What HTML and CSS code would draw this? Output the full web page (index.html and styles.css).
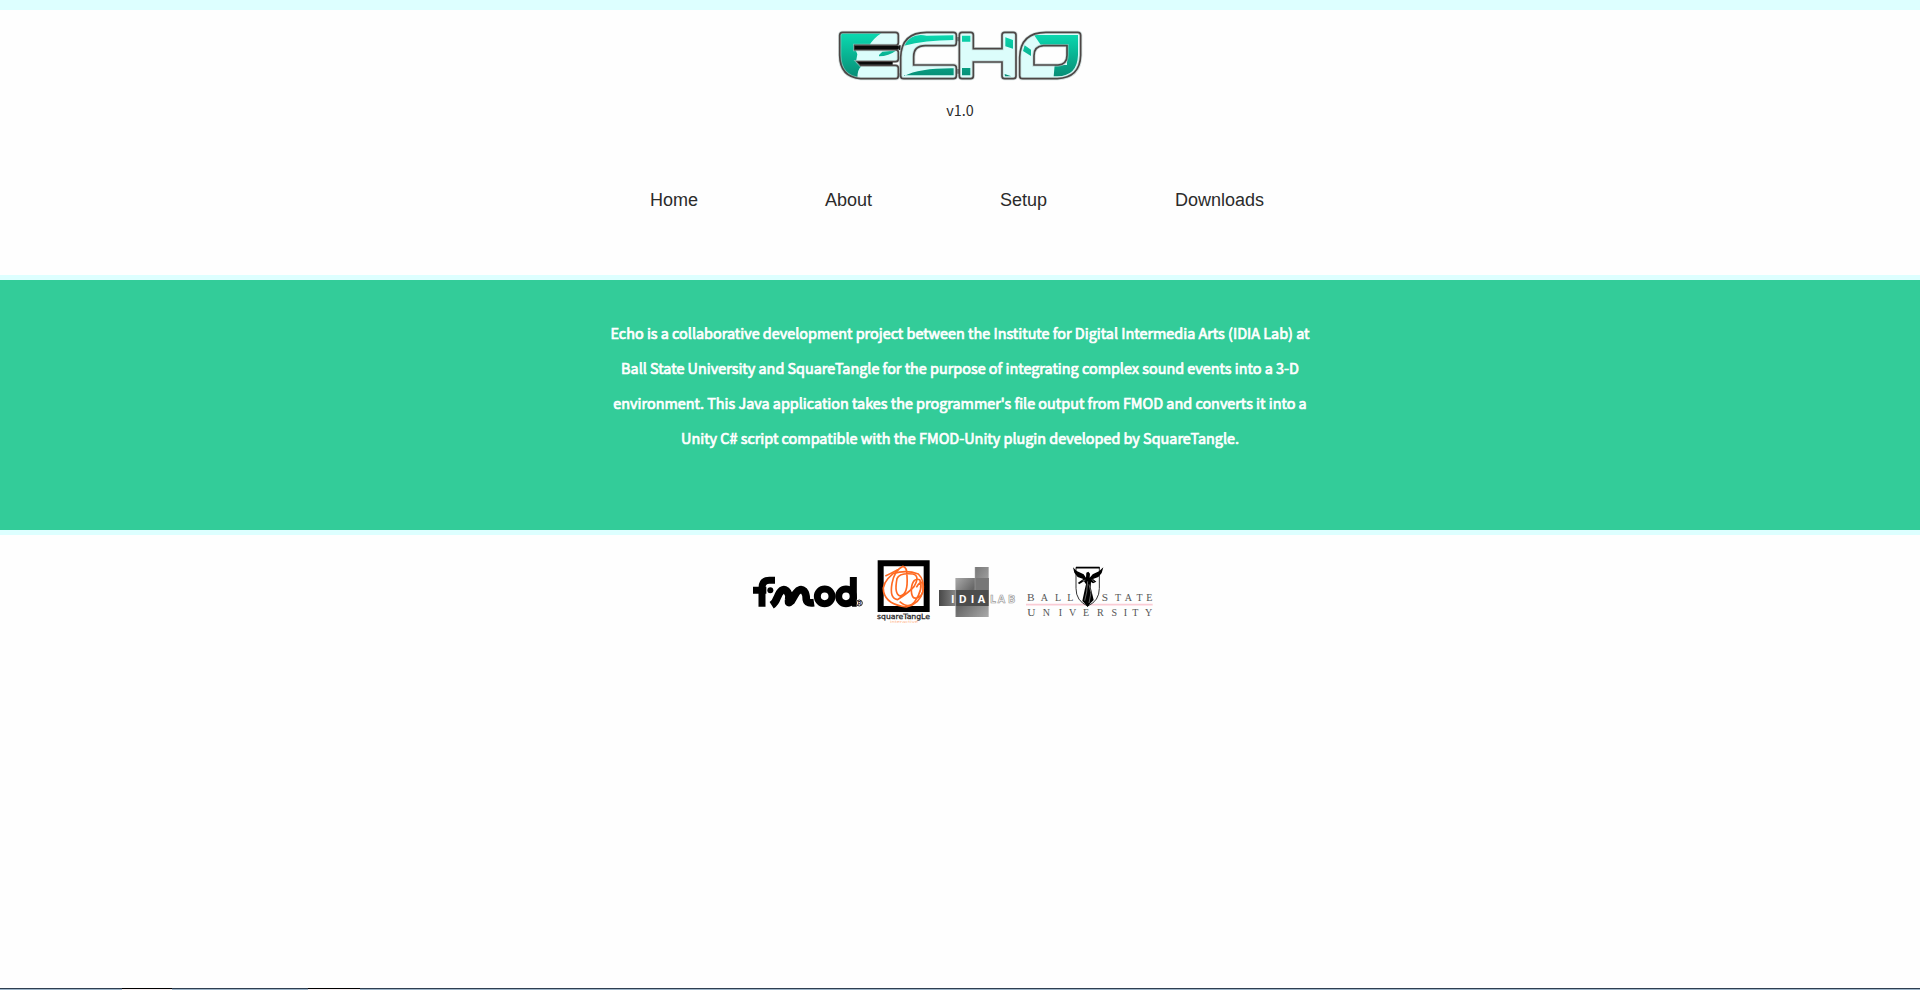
FILE: index.html
```html
<!DOCTYPE html>
<html lang="en">
<head>
<meta charset="utf-8">
<title>Echo</title>
<link rel="stylesheet" href="styles.css">
</head>
<body>
<header class="header">
  <svg class="logo" viewBox="21 87 738 156" role="img" aria-label="Echo">
    <defs>
      <linearGradient id="teal" x1="0" y1="96" x2="0" y2="236" gradientUnits="userSpaceOnUse">
        <stop offset="0" stop-color="#0bdcb2"/><stop offset="1" stop-color="#078a73"/>
      </linearGradient>
      <path id="e" d="M38 97H196Q205 97 205 105V128Q205 136 196 136H74V149H196Q205 149 205 157V177Q205 185 196 185H82L92 196H196Q205 196 205 204V227Q205 236 196 236H92Q30 232 29 166V106Q29 97 38 97Z"/>
      <path id="c" d="M290 97H370Q379 97 379 105V128Q379 137 370 137H286Q251 137 251 170V195H370Q379 195 379 203V228Q379 236 370 236H221Q212 236 212 227V172Q214 97 290 97Z"/>
      <path id="h" d="M396 97H422Q430 97 430 105V146H516V105Q516 97 524 97H550Q558 97 558 105V228Q558 236 550 236H524Q516 236 516 228V186H430V228Q430 236 422 236H396Q388 236 388 228V105Q388 97 396 97Z"/>
      <path id="o" fill-rule="evenodd" d="M648 97H743Q752 97 752 106V166Q750 233 682 236H578Q569 236 569 227V172Q571 97 648 97ZM640 137Q612 139 612 167V195H684Q711 194 711 166V137Z"/>
      <clipPath id="letters"><use href="#e"/><use href="#c"/><use href="#h"/><path clip-rule="evenodd" d="M648 97H743Q752 97 752 106V166Q750 233 682 236H578Q569 236 569 227V172Q571 97 648 97ZM640 137Q612 139 612 167V195H684Q711 194 711 166V137Z"/></clipPath>
    </defs>
    <path fill="#171514" d="M376 111H392V124H376ZM376 207H392V221H376ZM196 136H212V150H196ZM203 220H212V230H203Z"/>
    <g fill="#dcfdfb"><use href="#e"/><use href="#c"/><use href="#h"/><use href="#o"/></g>
    <g clip-path="url(#letters)" fill="url(#teal)">
      <path d="M29 97H158Q124 119 117 140L72 137L82 163L78 185L94 199Q82 208 82 236H29Z"/>
      <path d="M147 165L157 155L200 151Q176 169 147 169Z"/>
      <path d="M222 137Q240 98 290 107L370 106V120Q285 121 222 137Z"/>
      <path d="M222 228Q270 204 371 205V226H222Z"/>
      <path d="M396 107H421V125H396ZM396 204H421V226H396Z"/>
      <path d="M526 112L549 120V146L526 139ZM524 222L544 229H525Z"/>
      <path d="M584 136L603 149V168L579 153Z"/>
      <path d="M612 105H744V165Q742 228 682 229H671L674 195H711V137H634Z"/>
    </g>
    <g class="logo-edge-light"><use href="#e"/><use href="#c"/><use href="#h"/><use href="#o"/></g>
    <g class="logo-edge"><use href="#e"/><use href="#c"/><use href="#h"/><use href="#o"/></g>
    <path fill="#0a0a0a" d="M74 138H204V148H74ZM82 186H188V194H92Z"/>
    <path fill="#fff" d="M190 189H203V192H190Z"/>
  </svg>
  <p class="version">v1.0</p>
  <nav class="nav">
    <a>Home</a><a>About</a><a>Setup</a><a>Downloads</a>
  </nav>
</header>
<main class="intro">
  <p>Echo is a collaborative development project between the Institute for Digital Intermedia Arts (IDIA Lab) at<br>
  Ball State University and SquareTangle for the purpose of integrating complex sound events into a 3-D<br>
  environment. This Java application takes the programmer's file output from FMOD and converts it into a<br>
  Unity C# script compatible with the FMOD-Unity plugin developed by SquareTangle.</p>
</main>
<section class="partners">
  <svg class="fmod" viewBox="36 168 336 96" role="img" aria-label="fmod">
    <g fill="none" stroke="#000" stroke-width="21">
      <path d="M66 260V203Q66 181 88 181H105M39 211H79"/>
      <path stroke-width="23" stroke-linejoin="round" d="M95 256Q106 249 112 232Q125 200 139 212Q149 221 146 239Q143 254 154 243L168 219Q181 202 192 213Q199 221 199 239Q201 251 222 248"/>
      <circle cx="254" cy="229" r="22"/><circle cx="318" cy="229" r="22"/><path d="M340 171V238" />
    </g>
    <path d="M330 230H350V260H337Q329 253 330 230Z"/>
    <circle cx="91" cy="211" r="9"/>
    <circle cx="358" cy="249" r="9" fill="#fff" stroke="#222" stroke-width="3"/>
    <text class="reg" x="358" y="254" text-anchor="middle">R</text>
  </svg>
  <svg class="squaretangle" viewBox="408 117 165 198" role="img" aria-label="SquareTangle">
    <path fill="#fff" stroke="#000" stroke-width="18" d="M422 130H560V267H422Z"/>
    <g fill="none" stroke="#ff6a22" stroke-width="5">
      <path d="M460 160Q424 190 431 216Q440 254 499 261Q539 252 549 214Q554 180 535 162Q500 149 460 160Z"/>
      <path d="M436 168Q470 152 489 139Q501 141 501 168Q505 224 480 228Q462 222 471 176Q478 158 519 162Q541 168 522 200Q503 221 472 239Q448 236 456 190Q464 150 489 139"/>
      <path d="M479 245Q505 268 524 245Q552 205 539 179Q519 172 514 205Q513 241 533 233Q554 226 549 190Q542 180 529 202"/>
    </g>
    <text class="sq-name" x="411" y="297" textLength="159" lengthAdjust="spacingAndGlyphs">squareTangLe</text>
    <text class="sq-tag" x="450" y="310" textLength="84" lengthAdjust="spacingAndGlyphs">interactive</text>
  </svg>
  <svg class="idia" viewBox="24 138 237 156" role="img" aria-label="IDIA Lab">
    <defs>
      <linearGradient id="g1"><stop stop-color="#484848"/><stop offset="1" stop-color="#888"/></linearGradient>
      <linearGradient id="g2" x2="1" y2="1"><stop stop-color="#aaa"/><stop offset=".4" stop-color="#666"/><stop offset="1" stop-color="#aaa"/></linearGradient>
      <linearGradient id="g3" y2="1"><stop stop-color="#777"/><stop offset="1" stop-color="#aaa"/></linearGradient>
    </defs>
    <path fill="url(#g3)" d="M135 141H176V210H135Z"/>
    <path fill="url(#g2)" d="M77 174H176V291H77Z"/>
    <path fill="#777" d="M135 174H176V210H135Z"/>
    <path fill="url(#g1)" d="M27 210H78V258H27Z"/>
    <path fill="#4c4c4c" d="M78 210H176V258H78Z"/>
    <path fill="none" stroke="#aaa" stroke-width="1.5" d="M77 174V291M135 141V210"/>
    <text class="idia-name" y="248"><tspan x="63">I</tspan><tspan x="86">D</tspan><tspan x="122">I</tspan><tspan x="143">A</tspan></text>
    <text class="lab-name" y="249"><tspan x="180">L</tspan><tspan x="203">A</tspan><tspan x="234">B</tspan></text>
  </svg>
  <svg class="bsu" viewBox="285 138 387 156" role="img" aria-label="Ball State University">
    <path stroke="#f9ccd5" stroke-width="5" d="M288 254H668"/>
    <path fill="#fff" stroke="#333" stroke-width="3" d="M438 142H508V205Q508 243 473 258Q438 243 438 205Z"/>
    <path stroke="#000" stroke-width="5" d="M438 143H509"/>
    <path d="M429 142L440 153L461 163L468 173L469 158L475 155L480 161L479 173L488 163L507 154L520 142L515 159L505 171L489 177L499 185L489 190L483 186L482 202L491 240L480 251L473 261L465 251L457 243L464 210L468 193L462 184L447 193L444 188L460 177L443 171L433 158Z"/>
    <path fill="none" stroke="#999" stroke-width="2" d="M473 184L470 216L464 242M477 193L483 218L477 249M486 178L492 186M457 183L466 180"/>
    <g class="bsu-text">
      <text class="cap" x="302" y="243">B</text><text x="343" y="243">A</text><text x="384" y="243">L</text><text x="421" y="243">L</text>
      <text class="cap" x="525" y="243">S</text><text x="564" y="243">T</text><text x="595" y="243">A</text><text x="629" y="243">T</text><text x="658" y="243">E</text>
      <text class="cap" x="304" y="289">U</text><text x="349" y="289">N</text><text x="391" y="289">I</text><text x="428" y="289">V</text><text x="468" y="289">E</text><text x="511" y="289">R</text><text x="553" y="289">S</text><text x="586" y="289">I</text><text x="616" y="289">T</text><text x="656" y="289">Y</text>
    </g>
  </svg>
</section>
<footer class="edge"><i></i><i></i></footer>
</body>
</html>
```
FILE: styles.css
```css
* { box-sizing: border-box; }
body {
  margin: 0;
  height: 990px;
  overflow: hidden;
  display: flex;
  flex-direction: column;
  background: #fefefe;
  color: #2b2b2b;
  font-family: "Noto Sans CJK SC", "Noto Sans", sans-serif;
}
p { margin: 0; }
.header {
  height: 275px;
  border-top: 10px solid #ddffff;
  padding-top: 19px;
  display: flex;
  flex-direction: column;
  align-items: center;
}
.logo { width: 246px; height: 52px; display: block; }
.logo-edge-light { fill: none; stroke: #b5cbc9; stroke-width: 10; stroke-opacity: .6; }
.logo-edge { fill: none; stroke: #4c4645; stroke-width: 5; }
.version { margin-top: 17px; font-size: 14.4px; line-height: 24px; }
.nav {
  width: 620px;
  margin-top: 68px;
  display: grid;
  grid-template-columns: repeat(3, 175px) 95px;
  font: 18px/20px "Liberation Sans", Arial, sans-serif;
}
.intro {
  height: 260px;
  border: solid #ddffff;
  border-width: 5px 0;
  padding-top: 35px;
  background: #33cc99;
  color: #fff;
  text-align: center;
  font-size: 14.4px;
  line-height: 35px;
  white-space: nowrap;
  -webkit-text-stroke: .7px #fff;
}
.partners {
  display: flex;
  width: 402px;
  margin: 24px 0 0 752px;
  align-items: flex-start;
}
.partners svg { display: block; flex: none; overflow: visible; }
.fmod { width: 112px; height: 32px; margin: 17px 12px 0 0; }
.squaretangle { width: 55px; height: 66px; margin-right: 7px; }
.idia { width: 79px; height: 52px; margin: 7px 8px 0 0; }
.bsu { width: 129px; height: 52px; margin-top: 7px; }
.reg { font: bold 14px "Liberation Sans", sans-serif; }
.sq-name { font: 22px "DejaVu Sans", sans-serif; fill: #222; stroke: #222; stroke-width: .8; }
.sq-tag { font: 11px "DejaVu Sans", sans-serif; fill: #ffb68d; }
.idia-name { font: bold 32px "Open Sans", sans-serif; fill: #fff; }
.lab-name { font: bold 32px "Open Sans", sans-serif; fill: #fff; stroke: #999; stroke-width: 2; }
.bsu-text { font: 30px "Liberation Serif", serif; fill: #555; text-anchor: middle; }
.bsu-text .cap { font-size: 34px; }
.edge {
  margin-top: auto;
  height: 2px;
  border-top: 1px solid #2e3e50;
  background: #9db4c8;
  display: flex;
}
.edge i { width: 50px; height: 2px; margin: -1px 0 0 122px; border-top: 1px solid #000; background: #f4eef0; }
.edge i + i { margin-left: 136px; width: 52px; }
```
